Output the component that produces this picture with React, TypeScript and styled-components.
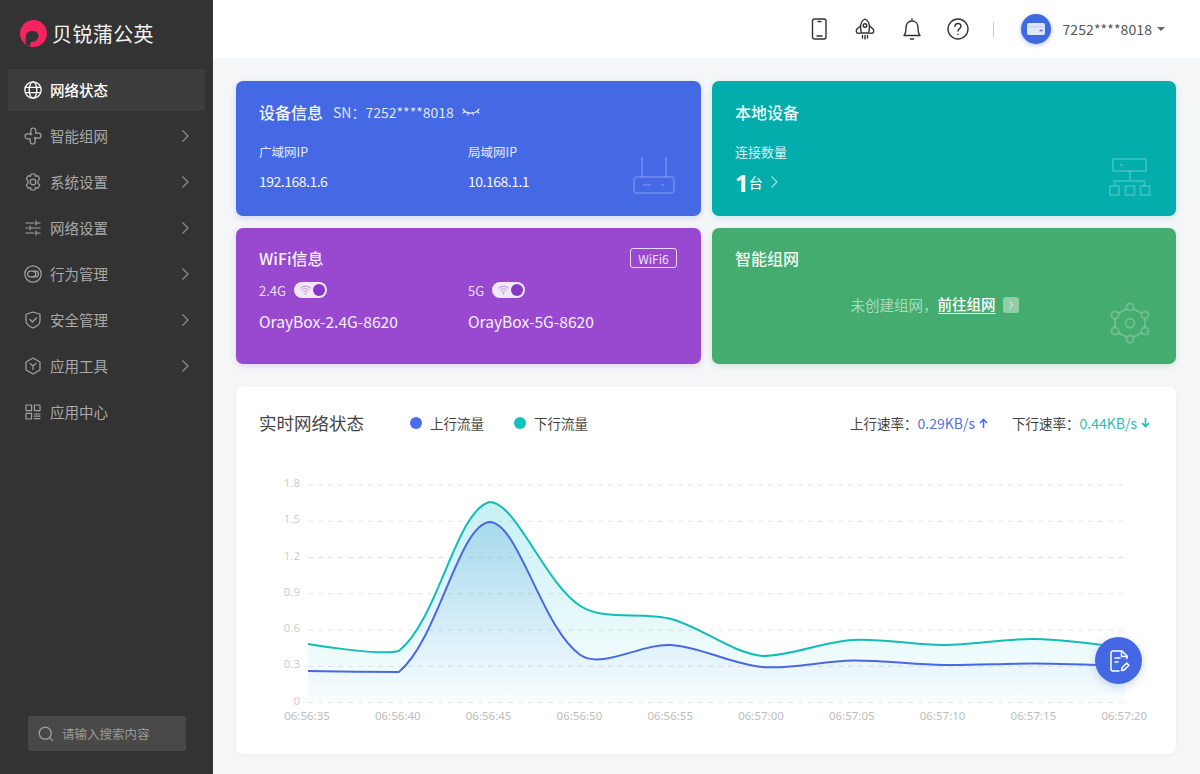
import React from "react";
import styled, { createGlobalStyle } from "styled-components";

const Global = createGlobalStyle`
  html, body { margin: 0; padding: 0; height: 100%; }
  body { font-family: "Noto Sans CJK SC", "Noto Sans", sans-serif; background: #f5f6f8; color: #333; }
  * { box-sizing: border-box; }
`;

const Page = styled.div`
  display: flex;
  width: 1200px;
  height: 774px;
  overflow: hidden;
  position: relative;
`;

const Sidebar = styled.aside`
  width: 213px;
  flex: none;
  background: #333333;
  display: flex;
  flex-direction: column;
`;

const Brand = styled.div`
  height: 69px;
  padding: 0 0 3px 20px;
  display: flex;
  align-items: center;
  gap: 5px;
`;

const BrandName = styled.span`
  font-size: 20px;
  color: #f2f2f2;
  letter-spacing: 0.4px;
`;

const Menu = styled.nav`
  display: flex;
  flex-direction: column;
  gap: 4px;
  padding: 0 8px;
`;

const MenuRow = styled.div<{ $active?: boolean }>`
  height: 42px;
  display: flex;
  align-items: center;
  padding: 0 13px 1px 16px;
  gap: 8px;
  font-size: 14.5px;
  color: ${(p) => (p.$active ? "#ffffff" : "#a9a9a9")};
  background: ${(p) => (p.$active ? "#3d3d3d" : "transparent")};
  font-weight: ${(p) => (p.$active ? 500 : 400)};
  svg { flex: none; }
`;

const MenuLabel = styled.span`
  flex: 1;
`;

const SearchBox = styled.div`
  margin: auto 0 23px 28px;
  width: 158px;
  height: 35px;
  background: #484848;
  border-radius: 3px;
  display: flex;
  align-items: center;
  padding-left: 10px;
  gap: 8px;
  font-size: 12.5px;
  color: #9a9a9a;
`;

const Content = styled.div`
  flex: 1;
  display: flex;
  flex-direction: column;
  min-width: 0;
`;

const Header = styled.header`
  height: 58px;
  flex: none;
  background: #ffffff;
  display: flex;
  align-items: center;
  justify-content: flex-end;
  padding: 0 35px 0 0;
`;

const HeaderIcon = styled.div`
  width: 46.5px;
  display: flex;
  justify-content: center;
  align-items: center;
`;

const HeaderDivider = styled.div`
  width: 1px;
  height: 15px;
  background: #c8c8c8;
  margin: 0 27px 0 12px;
`;

const Avatar = styled.div`
  width: 30px;
  height: 30px;
  border-radius: 50%;
  background: #3f69df;
  box-shadow: 0 1px 4px rgba(63, 105, 223, 0.45);
  display: flex;
  align-items: center;
  justify-content: center;
  margin-right: 11px;
`;

const Account = styled.span`
  font-size: 14px;
  color: #555;
  letter-spacing: 0.1px;
`;

const Caret = styled.span`
  margin-left: 5px;
  width: 0;
  height: 0;
  border-left: 4px solid transparent;
  border-right: 4px solid transparent;
  border-top: 4px solid #666;
`;

const Main = styled.main`
  flex: 1;
  padding: 23px 24px 20px 23px;
  display: flex;
  flex-direction: column;
  gap: 23px;
`;

const CardGrid = styled.section`
  display: grid;
  grid-template-columns: 465px 464px;
  grid-template-rows: 135px 136px;
  column-gap: 11px;
  row-gap: 12px;
`;

const Card = styled.div<{ $bg: string; $glow: string; $pad: number }>`
  position: relative;
  background: ${(p) => p.$bg};
  border-radius: 7px;
  box-shadow: 0 2px 6px ${(p) => p.$glow};
  padding: ${(p) => p.$pad}px 23px 0;
  color: #fff;
`;

const CardHead = styled.div`
  display: flex;
  align-items: center;
  height: 24px;
`;

const CardTitle = styled.span`
  font-size: 16px;
  font-weight: 500;
  color: rgba(255, 255, 255, 0.95);
`;

const Serial = styled.span`
  font-size: 14px;
  color: #dfe6fb;
  margin-left: 10px;
  margin-right: 8px;
`;

const Badge = styled.span`
  margin-left: auto;
  margin-right: 1px;
  width: 47px;
  height: 20px;
  border: 1px solid #ecd9f7;
  border-radius: 3px;
  font-size: 12px;
  color: #f3e8fa;
  display: flex;
  align-items: center;
  justify-content: center;
`;

const Columns = styled.div<{ $top: number }>`
  display: grid;
  grid-template-columns: 209px 1fr;
  margin-top: ${(p) => p.$top}px;
`;

const FieldLabel = styled.div`
  font-size: 12.5px;
  line-height: 18px;
  color: #e4e9fb;
`;

const FieldValue = styled.div`
  font-size: 14px;
  line-height: 20px;
  margin-top: 10px;
  color: #f4f6fe;
  letter-spacing: -0.5px;
`;

const WifiState = styled.div`
  display: flex;
  align-items: center;
  gap: 8px;
  height: 18px;
  font-size: 13px;
  color: #eedff8;
`;

const Toggle = styled.span`
  width: 33px;
  height: 16px;
  border-radius: 8px;
  background: #f2e8f9;
  display: flex;
  align-items: center;
  justify-content: space-between;
  padding: 0 2px 0 5px;
`;

const Knob = styled.span`
  width: 12px;
  height: 12px;
  border-radius: 50%;
  background: #8838c6;
`;

const NetName = styled.div`
  font-size: 15.6px;
  line-height: 22px;
  margin-top: 11px;
  color: #f8f0fd;
`;

const CountLabel = styled.div`
  font-size: 13px;
  line-height: 18px;
  margin-top: 19px;
  color: #d8f3f2;
`;

const CountRow = styled.div`
  display: flex;
  align-items: center;
  margin-top: 6px;
  height: 30px;
`;

const CountNum = styled.span`
  font-size: 24px;
  font-weight: 700;
  margin-right: 0;
  font-family: "Open Sans", sans-serif;
`;

const CountUnit = styled.span`
  font-size: 14px;
  margin-right: 4px;
`;

const MeshHint = styled.div`
  margin-top: 24px;
  display: flex;
  justify-content: center;
  align-items: center;
  font-size: 14.5px;
  color: #a9dcbc;
  padding-right: 19px;
`;

const MeshLink = styled.span`
  color: #fff;
  font-weight: 500;
  border-bottom: 1px solid #fff;
  line-height: 18px;
  margin-right: 7px;
`;

const MeshArrow = styled.span`
  width: 16px;
  height: 16px;
  border-radius: 3px;
  background: #92cfa9;
  display: flex;
  align-items: center;
  justify-content: center;
`;

const Watermark = styled.div<{ $right: number; $bottom: number }>`
  position: absolute;
  right: ${(p) => p.$right}px;
  bottom: ${(p) => p.$bottom}px;
  line-height: 0;
`;

const Panel = styled.section`
  height: 367px;
  background: #ffffff;
  border-radius: 7px;
  box-shadow: 0 1px 4px rgba(0, 0, 0, 0.03);
`;

const PanelHead = styled.div`
  height: 72px;
  padding: 0 26px 1px 23px;
  display: flex;
  align-items: center;
`;

const PanelTitle = styled.span`
  font-size: 17.5px;
  color: #444;
  margin-right: 46px;
`;

const Legend = styled.span`
  display: flex;
  align-items: center;
  gap: 8px;
  font-size: 13.5px;
  color: #444;
  margin-right: 30px;
`;

const Dot = styled.i<{ $color: string }>`
  width: 12px;
  height: 12px;
  border-radius: 50%;
  background: ${(p) => p.$color};
`;

const Rates = styled.div`
  margin-left: auto;
  display: flex;
  align-items: center;
  font-size: 13.5px;
  color: #444;
`;

const RateValue = styled.span<{ $color: string }>`
  color: ${(p) => p.$color};
  font-size: 14px;
  margin-right: 4px;
`;

const RateArrow = styled.span`
  display: flex;
  margin-right: 24px;
  &:last-child { margin-right: 0; }
`;

const ChartSvg = styled.svg`
  display: block;
`;

const AxisText = styled.text<{ $light?: boolean }>`
  font-size: 11.5px;
  font-family: "Noto Sans", sans-serif;
  fill: ${(p) => (p.$light ? "#cfcfcf" : "#bdbdbd")};
`;

const Fab = styled.div`
  position: absolute;
  left: 1095px;
  top: 637px;
  width: 47px;
  height: 47px;
  border-radius: 50%;
  background: #4468e3;
  box-shadow: 0 3px 10px rgba(68, 104, 227, 0.25);
  display: flex;
  align-items: center;
  justify-content: center;
`;

/* ---------- icons ---------- */
const Gray = { fill: "none", stroke: "#a3a3a3", strokeWidth: 1.2, strokeLinecap: "round", strokeLinejoin: "round" } as const;

const GlobeIcon = () => (
  <svg width="18" height="18" viewBox="0 0 18 18" fill="none" stroke="#fff" strokeWidth="1.3">
    <circle cx="9" cy="9" r="8.2" />
    <ellipse cx="9" cy="9" rx="3.8" ry="8.2" />
    <path d="M1 6.3h16M1 11.7h16" />
  </svg>
);
const MeshIcon = () => (
  <svg width="18" height="18" viewBox="0 0 18 18" {...Gray}>
    <path d="M6.8 8V3.500A2.500 2.500 0 0 1 11.800 3.500V6.200H14.500A2.500 2.500 0 0 1 14.500 11.200H10.200M11.200 10V14.500A2.500 2.500 0 0 1 6.200 14.500V11.800H3.500A2.500 2.500 0 0 1 3.500 6.800H7.800" />
  </svg>
);
const GearIcon = () => (
  <svg width="18" height="18" viewBox="0 0 18 18" {...Gray}>
    <path d="M7.2 1h3.6l.7 2.3 2.3-.6 1.9 3.1-1.7 1.8v2.8l1.7 1.8-1.9 3.1-2.3-.6-.7 2.3H7.2l-.7-2.3-2.3.6-1.9-3.1 1.7-1.8V7.6L2.3 5.8l1.9-3.1 2.3.6z" />
    <circle cx="9" cy="9" r="2.8" />
  </svg>
);
const SlidersIcon = () => (
  <svg width="18" height="18" viewBox="0 0 18 18" {...Gray}>
    <path d="M2 4h8M13 4h3M12 2v4M2 9h2M7 9h9M6 7v4M2 14h8M13 14h3M12 12v4" />
  </svg>
);
const BehaviorIcon = () => (
  <svg width="18" height="18" viewBox="0 0 18 18" {...Gray}>
    <circle cx="9" cy="9" r="8.2" />
    <rect x="3.6" y="6.2" width="10.8" height="5.6" rx="2.8" />
    <path d="M9.2 6.4a2.6 2.6 0 0 1 0 5.2" />
  </svg>
);
const ShieldIcon = () => (
  <svg width="18" height="18" viewBox="0 0 18 18" {...Gray}>
    <path d="M9 1l7 2.2v6c0 3.8-3.2 6.4-7 7.8-3.8-1.4-7-4-7-7.8v-6z" />
    <path d="M5.8 8.4L8.4 11l4-4" />
  </svg>
);
const ToolsIcon = () => (
  <svg width="18" height="18" viewBox="0 0 18 18" {...Gray}>
    <path d="M9 1l7 4v8l-7 4-7-4V5z" />
    <path d="M6 6.4L9 9l3-2.6M9 9v3.6" />
  </svg>
);
const AppsIcon = () => (
  <svg width="18" height="18" viewBox="0 0 18 18" {...Gray}>
    <rect x="2" y="2" width="5.6" height="5.6" />
    <rect x="10.4" y="2" width="5.6" height="5.6" />
    <rect x="2" y="10.4" width="5.6" height="5.6" />
    <path d="M10.4 11h5.6M10.4 13.2h5.6M10.4 15.6h5.6" />
  </svg>
);
const Chevron = ({ color = "#8f8f8f", size = 14 }: { color?: string; size?: number }) => (
  <svg width={size} height={size} viewBox="0 0 14 14" fill="none" stroke={color} strokeWidth="1.2">
    <path d="M4.5 1.5L10 7l-5.5 5.5" />
  </svg>
);
const SearchIcon = () => (
  <svg width="16" height="16" viewBox="0 0 16 16" fill="none" stroke="#a0a0a0" strokeWidth="1.3" strokeLinecap="round">
    <circle cx="7.2" cy="7.2" r="6" />
    <path d="M11.6 11.6l3 3" />
  </svg>
);
const LogoIcon = () => (
  <svg width="27" height="27" viewBox="0 0 27 27">
    <circle cx="13.5" cy="13.5" r="13.5" fill="#f5245f" />
    <path d="M6 16c0-3 3-5 6.500-5 3.500 0 6 2 6 5s-2.500 5.500-5.500 5.500c-2 0-3 1-3 4.800l-3.500-1.600C5 23 6 19 6 16z" fill="#333" />
  </svg>
);

const Dark = { fill: "none", stroke: "#333", strokeWidth: 1.4, strokeLinecap: "round", strokeLinejoin: "round" } as const;
const PhoneIcon = () => (
  <svg width="16" height="22" viewBox="0 0 16 22" {...Dark}>
    <rect x="1.5" y="1" width="13.5" height="20" rx="2" />
    <path d="M7 3.500h3M6 18h5" />
  </svg>
);
const RocketIcon = () => (
  <svg width="20" height="22" viewBox="0 0 20 22" {...Dark}>
    <path d="M10 1c3 1.600 4.600 5 4.400 8.400l-.6 5.600H6.200l-.6-5.600C5.400 6 7 2.600 10 1z" />
    <circle cx="10" cy="7.500" r="1.800" />
    <path d="M5.400 8L2 11c-1 1-.8 3 0 4l3 .2M14.600 8L18 11c1 1 .8 3 0 4l-3 .2M7.500 17.500v2.500M10 17.500v3.500M12.500 17.500v2.500" />
  </svg>
);
const BellIcon = () => (
  <svg width="18" height="23" viewBox="0 0 18 23" {...Dark}>
    <path d="M9 1v2M9 3c-3.600 0-6 2.800-6 6.400 0 4-.6 6.400-2 8.100h16c-1.400-1.700-2-4.100-2-8.100C15 5.800 12.600 3 9 3z" />
    <path d="M7.500 21h3" />
  </svg>
);
const HelpIcon = () => (
  <svg width="22" height="22" viewBox="0 0 22 22" {...Dark}>
    <circle cx="11" cy="11" r="10" />
    <path d="M8 8.500c0-1.800 1.300-3 3-3s3 1.200 3 2.800c0 2.300-3 2.400-3 4.700" />
    <path d="M11 16.200v.3" />
  </svg>
);
const WalletIcon = () => (
  <svg width="18" height="12" viewBox="0 0 18 12">
    <path d="M2 0h14a2 2 0 0 1 2 2v8a2 2 0 0 1-2 2H2a2 2 0 0 1-2-2V2a2 2 0 0 1 2-2z" fill="#dfe7fb" />
    <path d="M0 3.500h18" stroke="#c6d3f6" strokeWidth="1.500" />
    <path d="M12.500 7.500h3" stroke="#3f69df" strokeWidth="1.500" />
  </svg>
);
const EyeClosed = () => (
  <svg width="18" height="9" viewBox="0 0 18 9" fill="none" stroke="#dfe6fb" strokeWidth="1.100" strokeLinecap="round">
    <path d="M1.500 2.500C5 6 12 6 16.500 2.500M1 5l2-1.300M5.500 7l1-2.200M11.500 7l-1-2.200M17 5l-2-1.300M1 1l1.500 1.500M17 1l-1.500 1.500" />
  </svg>
);
const RouterIcon = () => (
  <svg width="44" height="38" viewBox="0 0 44 38" fill="none" stroke="rgba(255,255,255,0.18)" strokeWidth="2">
    <path d="M10 0v20M34 0v20" />
    <rect x="2" y="20" width="40" height="16" rx="3" />
    <path d="M11 28h8M29 28h3" />
  </svg>
);
const TopologyIcon = () => (
  <svg width="42" height="38" viewBox="0 0 42 38" fill="none" stroke="rgba(255,255,255,0.2)" strokeWidth="2">
    <rect x="4" y="1" width="33" height="12" />
    <path d="M11 7h3M21 13v11M5.500 28v-5h30v5" />
    <rect x="1" y="28" width="9" height="9" />
    <rect x="16.500" y="28" width="9" height="9" />
    <rect x="31.500" y="28" width="9" height="9" />
  </svg>
);
const HexNodesIcon = () => (
  <svg width="40" height="42" viewBox="0 0 40 42" fill="none" stroke="rgba(255,255,255,0.22)" strokeWidth="2">
    <circle cx="20" cy="5" r="3.600" />
    <circle cx="20" cy="37" r="3.600" />
    <circle cx="5" cy="13" r="3.600" />
    <circle cx="35" cy="13" r="3.600" />
    <circle cx="5" cy="29" r="3.600" />
    <circle cx="35" cy="29" r="3.600" />
    <circle cx="20" cy="21" r="4.500" />
    <path d="M16.500 7L8.500 11M23.500 7l8 4M5 17v8M35 17v8M8.500 31l8 4M31.500 31l-8 4" />
  </svg>
);
const WifiIcon = () => (
  <svg width="13" height="10" viewBox="0 0 13 10" fill="none" stroke="#bb8ce0" strokeWidth="1">
    <path d="M1 3.500c3-3 8-3 11 0M2.800 5.300c2-2 5.400-2 7.400 0M4.600 7c1-1 2.800-1 3.800 0" />
    <circle cx="6.500" cy="8.800" r=".5" />
  </svg>
);
const ArrowUp = ({ color }: { color: string }) => (
  <svg width="9" height="10" viewBox="0 0 9 10" fill="none" stroke={color} strokeWidth="1.600">
    <path d="M4.500 10V2M1 5l3.500-3.500L8 5" />
  </svg>
);
const ArrowDown = ({ color }: { color: string }) => (
  <svg width="9" height="10" viewBox="0 0 9 10" fill="none" stroke={color} strokeWidth="1.600">
    <path d="M4.500 0v8M1 5l3.500 3.500L8 5" />
  </svg>
);
const ReportIcon = () => (
  <svg width="24" height="24" viewBox="0 0 24 24" fill="none" stroke="#fff" strokeWidth="1.500" strokeLinecap="round" strokeLinejoin="round">
    <path d="M20 9.500V7l-5-5H6a2 2 0 0 0-2 2v16a2 2 0 0 0 2 2h6" />
    <path d="M14.500 2v5.500H20M8 9h5M8 13h3" />
    <path d="M14.500 21.500l.6-2.800 4.600-4.600 2.200 2.200-4.600 4.600z" />
  </svg>
);

/* ---------- chart ---------- */
const xs = Array.from({ length: 10 }, (_, i) => 308 + i * 90.8);
const upY = [671, 672, 522, 655, 645, 667, 660.5, 665, 663.5, 666];
const downY = [644, 651, 502, 606, 619, 656, 640, 645, 639, 648];
const baseY = 702.6;
const gridVals = ["1.8", "1.5", "1.2", "0.9", "0.6", "0.3", "0"];
const timeLabels = ["06:56:35", "06:56:40", "06:56:45", "06:56:50", "06:56:55", "06:57:00", "06:57:05", "06:57:10", "06:57:15", "06:57:20"];

const clamp = (v: number, lo: number, hi: number) => Math.max(lo, Math.min(v, hi));

// Control points lie along the chord between a point's neighbours; their heights
// are clamped to the whole series' range, so the curve stops dead at its extremes.
function smoothPath(px: number[], py: number[], smooth = 0.33): string {
  const n = px.length;
  const lo = Math.min(...py);
  const hi = Math.max(...py);
  let d = `M${px[0]} ${py[0]}`;
  let cx = px[0];
  let cy = py[0];
  for (let i = 1; i < n; i++) {
    if (i === n - 1) {
      d += `C${cx} ${cy} ${px[i]} ${py[i]} ${px[i]} ${py[i]}`;
      break;
    }
    const lp = Math.hypot(px[i] - px[i - 1], py[i] - py[i - 1]);
    const ln = Math.hypot(px[i + 1] - px[i], py[i + 1] - py[i]);
    const r = ln / (ln + lp);
    const vx = (px[i + 1] - px[i - 1]) * smooth;
    const vy = (py[i + 1] - py[i - 1]) * smooth;
    d += `C${cx} ${cy} ${px[i] - vx * (1 - r)} ${clamp(py[i] - vy * (1 - r), lo, hi)} ${px[i]} ${py[i]}`;
    cx = px[i] + vx * r;
    cy = clamp(py[i] + vy * r, lo, hi);
  }
  return d;
}

const upPath = smoothPath(xs, upY);
const downPath = smoothPath(xs, downY);
const closeArea = `L${xs[9]} ${baseY}L${xs[0]} ${baseY}Z`;

const Chart = () => (
  <ChartSvg width="940" height="295" viewBox="236 459 940 295">
    <defs>
      <linearGradient id="upFill" x1="0" y1="0" x2="0" y2="1">
        <stop offset="0" stopColor="#2f8fd0" stopOpacity="0.24" />
        <stop offset="1" stopColor="#4a7cf0" stopOpacity="0" />
      </linearGradient>
      <linearGradient id="downFill" x1="0" y1="0" x2="0" y2="1">
        <stop offset="0" stopColor="#14c4cf" stopOpacity="0.24" />
        <stop offset="1" stopColor="#14c4cf" stopOpacity="0.02" />
      </linearGradient>
    </defs>
    {gridVals.map((v, i) => {
      const y = 485 + i * 36.27;
      return (
        <g key={v}>
          <line x1="308" x2="1125" y1={y} y2={y} stroke="#e6e6e6" strokeDasharray="5 5" />
          <AxisText $light x="300" y={y + 2} textAnchor="end">{v}</AxisText>
        </g>
      );
    })}
    {timeLabels.map((t, i) => (
      <AxisText key={t} x={xs[i] - 1} y="720" textAnchor="middle">{t}</AxisText>
    ))}
    <path d={downPath + closeArea} fill="url(#downFill)" />
    <path d={upPath + closeArea} fill="url(#upFill)" />
    <path d={downPath} fill="none" stroke="#12bdb5" strokeWidth="2" />
    <path d={upPath} fill="none" stroke="#4a68e0" strokeWidth="2" />
  </ChartSvg>
);

const menu = [
  { label: "网络状态", icon: <GlobeIcon />, active: true },
  { label: "智能组网", icon: <MeshIcon />, more: true },
  { label: "系统设置", icon: <GearIcon />, more: true },
  { label: "网络设置", icon: <SlidersIcon />, more: true },
  { label: "行为管理", icon: <BehaviorIcon />, more: true },
  { label: "安全管理", icon: <ShieldIcon />, more: true },
  { label: "应用工具", icon: <ToolsIcon />, more: true },
  { label: "应用中心", icon: <AppsIcon /> },
];

export default function App() {
  return (
    <Page>
      <Global />
      <Sidebar>
        <Brand>
          <LogoIcon />
          <BrandName>贝锐蒲公英</BrandName>
        </Brand>
        <Menu>
          {menu.map((m) => (
            <MenuRow key={m.label} $active={m.active}>
              {m.icon}
              <MenuLabel>{m.label}</MenuLabel>
              {m.more && <Chevron />}
            </MenuRow>
          ))}
        </Menu>
        <SearchBox>
          <SearchIcon />
          请输入搜索内容
        </SearchBox>
      </Sidebar>
      <Content>
        <Header>
          <HeaderIcon><PhoneIcon /></HeaderIcon>
          <HeaderIcon><RocketIcon /></HeaderIcon>
          <HeaderIcon><BellIcon /></HeaderIcon>
          <HeaderIcon><HelpIcon /></HeaderIcon>
          <HeaderDivider />
          <Avatar><WalletIcon /></Avatar>
          <Account>7252****8018</Account>
          <Caret />
        </Header>
        <Main>
          <CardGrid>
            <Card $bg="#4569e5" $glow="rgba(69,105,229,0.2)" $pad={19}>
              <CardHead>
                <CardTitle>设备信息</CardTitle>
                <Serial>SN：7252****8018</Serial>
                <EyeClosed />
              </CardHead>
              <Columns $top={19}>
                <div>
                  <FieldLabel>广域网IP</FieldLabel>
                  <FieldValue>192.168.1.6</FieldValue>
                </div>
                <div>
                  <FieldLabel>局域网IP</FieldLabel>
                  <FieldValue>10.168.1.1</FieldValue>
                </div>
              </Columns>
              <Watermark $right={25} $bottom={21}><RouterIcon /></Watermark>
            </Card>
            <Card $bg="#02adac" $glow="rgba(2,173,172,0.2)" $pad={19}>
              <CardHead><CardTitle>本地设备</CardTitle></CardHead>
              <CountLabel>连接数量</CountLabel>
              <CountRow>
                <CountNum>1</CountNum>
                <CountUnit>台</CountUnit>
                <Chevron color="#9fe0de" />
              </CountRow>
              <Watermark $right={25} $bottom={20}><TopologyIcon /></Watermark>
            </Card>
            <Card $bg="#9849d0" $glow="rgba(152,73,208,0.2)" $pad={18}>
              <CardHead>
                <CardTitle>WiFi信息</CardTitle>
                <Badge>WiFi6</Badge>
              </CardHead>
              <Columns $top={11}>
                <div>
                  <WifiState>2.4G<Toggle><WifiIcon /><Knob /></Toggle></WifiState>
                  <NetName>OrayBox-2.4G-8620</NetName>
                </div>
                <div>
                  <WifiState>5G<Toggle><WifiIcon /><Knob /></Toggle></WifiState>
                  <NetName>OrayBox-5G-8620</NetName>
                </div>
              </Columns>
            </Card>
            <Card $bg="#44ac6e" $glow="rgba(68,172,110,0.2)" $pad={18}>
              <CardHead><CardTitle>智能组网</CardTitle></CardHead>
              <MeshHint>
                未创建组网，
                <MeshLink>前往组网</MeshLink>
                <MeshArrow><Chevron color="#fff" size={8} /></MeshArrow>
              </MeshHint>
              <Watermark $right={26} $bottom={20}><HexNodesIcon /></Watermark>
            </Card>
          </CardGrid>
          <Panel>
            <PanelHead>
              <PanelTitle>实时网络状态</PanelTitle>
              <Legend><Dot $color="#4a6cf0" />上行流量</Legend>
              <Legend><Dot $color="#12c2bb" />下行流量</Legend>
              <Rates>
                上行速率：
                <RateValue $color="#5a70d8">0.29KB/s</RateValue>
                <RateArrow><ArrowUp color="#4a6cf0" /></RateArrow>
                下行速率：
                <RateValue $color="#2cbfb4">0.44KB/s</RateValue>
                <RateArrow><ArrowDown color="#12bdb5" /></RateArrow>
              </Rates>
            </PanelHead>
            <Chart />
          </Panel>
        </Main>
      </Content>
      <Fab><ReportIcon /></Fab>
    </Page>
  );
}
